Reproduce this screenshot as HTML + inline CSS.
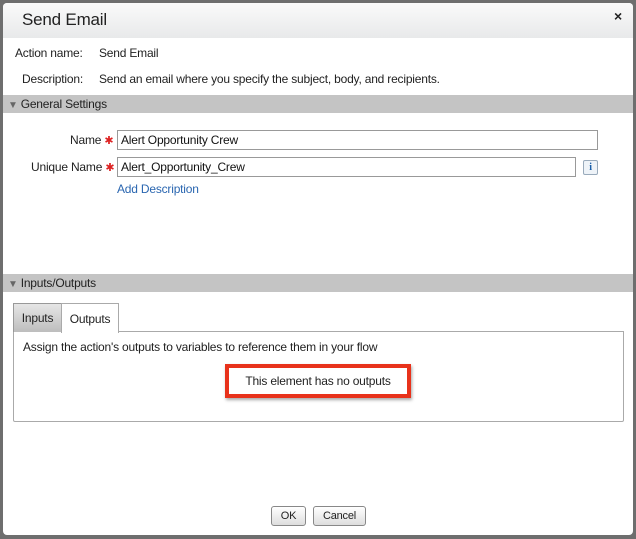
<!DOCTYPE html><html><head><style>
body{margin:0;width:636px;height:539px;background:#6e6e6e;font-family:"Liberation Sans",sans-serif;font-size:12px;letter-spacing:-0.2px;color:#222;position:relative;overflow:hidden}
.a{position:absolute}
#d{left:3px;top:3px;width:630px;height:532px;background:#fff;border-radius:4px}
.bar{left:3px;width:630px;height:18px;background:#c4c4c4;line-height:18px;font-size:12px}
.bar span{color:#666;font-size:10px;margin:0 3px 0 5px}
input{position:absolute;border:1px solid #999;height:18px;padding:0 3px;font:12px "Liberation Sans",sans-serif;letter-spacing:-0.2px;box-sizing:border-box;color:#111}
.btn{height:20px;border:1px solid #888;border-radius:3px;background:linear-gradient(#fff,#ddd);box-sizing:border-box;text-align:center;line-height:18px;font-size:11px}
.req{color:#d22;font-size:11px}
</style></head><body>
<div class="a" id="d"></div>
<div class="a" style="left:3px;top:3px;width:630px;height:35px;background:linear-gradient(#fafafa,#e8e9ea);border-radius:4px 4px 0 0"></div>
<div class="a" style="left:22px;top:10px;font-size:17px;color:#222">Send Email</div>
<div class="a" style="left:614px;top:8px;font-size:14px;font-weight:bold">×</div>
<div class="a" style="left:15px;top:46px">Action name:</div>
<div class="a" style="left:99px;top:46px">Send Email</div>
<div class="a" style="left:22px;top:72px">Description:</div>
<div class="a" style="left:99px;top:72px">Send an email where you specify the subject, body, and recipients.</div>
<div class="a bar" style="top:95px"><span>▼</span>General Settings</div>
<div class="a" style="left:70px;top:133px">Name <span class="req">✱</span></div>
<input value="Alert Opportunity Crew" style="left:117px;top:130px;width:481px;height:20px">
<div class="a" style="left:31px;top:160px">Unique Name <span class="req">✱</span></div>
<input value="Alert_Opportunity_Crew" style="left:117px;top:157px;width:459px;height:20px">
<div class="a" style="left:583px;top:160px;width:13px;height:13px;border:1px solid #9ab;border-radius:2px;background:#eef3f8;color:#1a5ea8;font-size:10px;font-weight:bold;text-align:center;line-height:13px;font-family:'Liberation Serif',serif">i</div>
<div class="a" style="left:117px;top:182px;color:#2a66b0">Add Description</div>
<div class="a bar" style="top:274px"><span>▼</span>Inputs/Outputs</div>
<div class="a" style="left:13px;top:331px;width:609px;height:89px;border:1px solid #aaa;border-radius:0 0 2px 2px"></div>
<div class="a" style="left:13px;top:303px;width:47px;height:28px;border:1px solid #999;border-bottom:none;background:linear-gradient(#e6e6e6,#bdbdbd);line-height:28px;text-align:center;font-size:12px">Inputs</div>
<div class="a" style="left:61px;top:303px;width:56px;height:29px;border:1px solid #aaa;border-bottom:none;background:#fff;line-height:30px;text-align:center">Outputs</div>
<div class="a" style="left:23px;top:340px">Assign the action's outputs to variables to reference them in your flow</div>
<div class="a" style="left:225px;top:364px;width:178px;height:26px;border:4px solid #e8321b;box-shadow:1px 2px 3px rgba(0,0,0,.35);text-align:center;line-height:26px">This element has no outputs</div>
<div class="a btn" style="left:271px;top:506px;width:35px">OK</div>
<div class="a btn" style="left:313px;top:506px;width:53px">Cancel</div>
</body></html>
